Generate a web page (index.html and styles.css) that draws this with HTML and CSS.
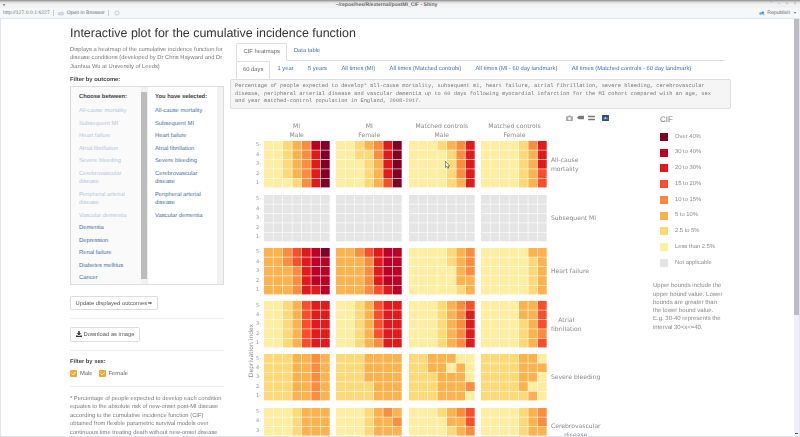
FILE: index.html
```html
<!DOCTYPE html>
<html lang="en">
<head>
  <meta charset="UTF-8" />
  <title>postMI_CIF - Shiny</title>
  <link rel="stylesheet" href="styles.css">
</head>
<body>
  <div class="titlebar">
    <span class="menu-caret">&#9662;</span>
    <span class="window-title">~/repos/hes/R/external/postMI_CIF - Shiny</span>
    <span class="window-buttons"><i>&#8963;</i><i>&#8722;</i><i>+</i><i>&#215;</i></span>
  </div>
  <div class="toolbar">
    <span class="url">http://127.0.0.1:6227</span>
    <span class="sep"></span>
    <svg class="tool-icon" viewBox="0 0 8 6"><path d="M0 2h3l1-1h3v4H1z" fill="#d5dfea" stroke="#9fb0c2" stroke-width=".5"/></svg>
    <span class="open-browser">Open in Browser</span>
    <span class="sep"></span>
    <svg class="refresh-icon" viewBox="0 0 8 8"><circle cx="4" cy="4" r="2.8" fill="none" stroke="#b9c6d8" stroke-width="1.1"/></svg>
    <span class="publish">
      <svg class="publish-icon" viewBox="0 0 8 6"><circle cx="2" cy="3" r="1.7" fill="#5aa7e0"/><circle cx="5" cy="2" r="1.7" fill="#2f85cc"/><circle cx="6" cy="4" r="1.4" fill="#8cc3ea"/></svg>
      Republish <span class="caret">&#9662;</span>
    </span>
  </div>

  <div class="frame">
    <div class="page">
      <h1>Interactive plot for the cumulative incidence function</h1>
      <div class="layout">
        <aside class="sidebar">
          <p class="intro">Displays a heatmap of the cumulative incidence function for disease conditions (developed by Dr Chris Hayward and Dr Jianhua Wu at University of Leeds)</p>
          <div class="filter-label">Filter by outcome:</div>
          <div class="multi">
            <div class="multi-col multi-left">
              <div class="multi-head">Choose between:</div>
              <a class="dim">All-cause mortality</a>
              <a class="dim">Subsequent MI</a>
              <a class="dim">Heart failure</a>
              <a class="dim">Atrial fibrillation</a>
              <a class="dim">Severe bleeding</a>
              <a class="dim">Cerebrovascular disease</a>
              <a class="dim">Peripheral arterial disease</a>
              <a class="dim">Vascular dementia</a>
              <a>Dementia</a>
              <a>Depression</a>
              <a>Renal failure</a>
              <a>Diabetes mellitus</a>
              <a>Cancer</a>
              <span class="scroll scroll-thumb"></span>
            </div>
            <div class="multi-col multi-right">
              <div class="multi-head">You have selected:</div>
              <a>All-cause mortality</a>
              <a>Subsequent MI</a>
              <a>Heart failure</a>
              <a>Atrial fibrillation</a>
              <a>Severe bleeding</a>
              <a>Cerebrovascular disease</a>
              <a>Peripheral arterial disease</a>
              <a>Vascular dementia</a>
              <span class="scroll"></span>
            </div>
          </div>
          <button class="btn btn-update">
            Update displayed outcomes
            <svg class="arrow-icon" viewBox="0 0 4 4"><path d="M0 1.6h2.4V.7L4 2 2.4 3.3v-.9H0z" fill="#444"/></svg>
          </button>
          <hr />
          <button class="btn btn-download">
            <svg class="dl-icon" viewBox="0 0 8 8"><path d="M3 0h2v3h2L4 6 1 3h2zM0 6h2l2 1 2-1h2v2H0z" fill="#333"/></svg>
            Download as image
          </button>
          <hr />
          <div class="filter-label">Filter by sex:</div>
          <div class="checks">
            <label class="check"><span class="box"><svg viewBox="0 0 8 8"><path d="M1.8 4l1.6 1.6 2.9-3" fill="none" stroke="#fff" stroke-width="1.1"/></svg></span>Male</label>
            <label class="check"><span class="box"><svg viewBox="0 0 8 8"><path d="M1.8 4l1.6 1.6 2.9-3" fill="none" stroke="#fff" stroke-width="1.1"/></svg></span>Female</label>
          </div>
          <hr />
          <p class="footnote">* Percentage of people expected to develop each condition equates to the absolute risk of new-onset post-MI disease according to the cumulative incidence function (CIF) obtained from flexible parametric survival models over continuous time treating death without new-onset disease</p>
        </aside>

        <main class="content">
          <div class="tabs">
            <a class="tab active">CIF heatmaps</a>
            <a class="tab">Data table</a>
          </div>
          <div class="tabs subtabs">
            <a class="tab active">60 days</a>
            <a class="tab">1 year</a>
            <a class="tab">5 years</a>
            <a class="tab">All times (MI)</a>
            <a class="tab">All times (Matched controls)</a>
            <a class="tab">All times (MI - 60 day landmark)</a>
            <a class="tab">All times (Matched controls - 60 day landmark)</a>
          </div>
          <pre class="caption">Percentage of people expected to develop* all-cause mortality, subsequent mi, heart failure, atrial fibrillation, severe bleeding, cerebrovascular
disease, peripheral arterial disease and vascular dementia up to 60 days following myocardial infarction for the MI cohort compared with an age, sex
and year matched-control population in England, 2008-2017.</pre>

          <div class="figure">
            <div class="plot">
              <div class="modebar">
                <svg viewBox="0 0 8 7"><path d="M0 1.5h2L3 .5h2l1 1h2V7H0zM4 2.4a1.8 1.8 0 1 0 .01 0z" fill="#a9a9a9" fill-rule="evenodd"/></svg>
                <svg viewBox="0 0 8 7"><path d="M0 3l2-2h6v4H2z" fill="#777"/></svg>
                <svg viewBox="0 0 8 7"><path d="M0 1h8v1.6H0zM0 4.4h8V6H0z" fill="#777"/></svg>
                <svg class="plotly-logo" viewBox="0 0 8 7"><rect width="8" height="7" fill="#2a4d7c"/><path d="M2 3h1v2H2zM3.6 2h1v3h-1zM5.2 3h1v2h-1z" fill="#c9d6e6"/></svg>
              </div>
              <div class="col-heads">
                <div>MI<br />Male</div>
                <div>MI<br />Female</div>
                <div>Matched controls<br />Male</div>
                <div>Matched controls<br />Female</div>
              </div>
              <div id="rows" class="rows"></div>
              <div class="y-title">Deprivation index</div>
              <svg class="cursor" viewBox="0 0 5 8"><path d="M.4.3v6.4l1.4-1.3 1 2.1 1-.5-1-2h1.9z" fill="#fff" stroke="#222" stroke-width=".5"/></svg>
            </div>
            <div class="legend">
              <div class="legend-title">CIF</div>
              <div class="legend-item"><span class="swatch c8"></span>Over 40%</div>
              <div class="legend-item"><span class="swatch c7"></span>30 to 40%</div>
              <div class="legend-item"><span class="swatch c6"></span>20 to 30%</div>
              <div class="legend-item"><span class="swatch c5"></span>15 to 20%</div>
              <div class="legend-item"><span class="swatch c4"></span>10 to 15%</div>
              <div class="legend-item"><span class="swatch c3"></span>5 to 10%</div>
              <div class="legend-item"><span class="swatch c2"></span>2.5 to 5%</div>
              <div class="legend-item"><span class="swatch c1"></span>Less than 2.5%</div>
              <div class="legend-item"><span class="swatch c0"></span>Not applicable</div>
              <p class="legend-note">Upper bounds include the upper bound value. Lower bounds are greater than the lower bound value. E.g. 30-40 represents the interval 30&lt;x&lt;=40.</p>
            </div>
          </div>
        </main>
      </div>
    </div>
    <div class="page-scroll"><span class="page-thumb"></span><span class="page-arrow"></span></div>
  </div>
  <script src="script.js"></script>
</body>
</html>
```

FILE: styles.css
```css
* { margin: 0; padding: 0; box-sizing: border-box; }
html, body { height: 100%; overflow: hidden; }
body {
  display: flex; flex-direction: column;
  font-family: 'Liberation Sans', Arial, sans-serif;
  font-size: 5.8px; line-height: 8.4px; color: #555; background: #fff;
  text-rendering: geometricPrecision;
}

/* window chrome */
.titlebar {
  height: 8px; flex: none; display: flex; justify-content: center;
  position: relative; font-size: 5.1px; line-height: 6px; font-weight: bold; color: #666;
  background: linear-gradient(#8a8a8a 0, #d8d8d8 2px, #f2f2f2 4px);
}
.menu-caret { position: absolute; left: 3px; top: 2px; font-size: 4px; color: #777; }
.window-title { margin: 2px 27px 0 0; }
.window-buttons { position: absolute; right: 3px; top: 1px; display: flex; gap: 4px; font-weight: normal; color: #999; font-size: 5px; }
.window-buttons i { font-style: normal; width: 4px; text-align: center; }
.toolbar {
  height: 10px; flex: none; display: flex; align-items: center; gap: 3px;
  padding: 0 3px; font-size: 5.1px; color: #666; background: #f6f7f8;
}
.url { color: #777; }
.sep { width: 1px; height: 6px; background: #ccc; }
.tool-icon { width: 6px; height: 5px; margin-left: 1px; }
.refresh-icon { width: 6px; height: 6px; margin-left: 2px; }
.publish { margin-left: auto; display: flex; align-items: center; gap: 2px; margin-right: 1px; }
.publish-icon { width: 6px; height: 5px; }
.caret { font-size: 4px; margin-left: 2px; }

.frame {
  flex: 1; min-height: 0; display: flex;
  border: 1px solid #dfe5f4; border-width: 1px 1px 1.5px 1px;
  filter: blur(0.3px);
}
.page { flex: 1; min-width: 0; overflow: hidden; padding-left: 69px; }
.page-scroll { width: 5px; flex: none; background: #f1f1f1; position: relative; }
.page-thumb { display: block; height: 296px; background: #bcbcbc; }
.page-arrow { position: absolute; bottom: 2px; left: 1px; width: 3px; height: 1.5px; background: #555; }

h1 { font-size: 12.46px; line-height: 16px; font-weight: normal; color: #333; padding-top: 6px; height: 24px; }

.layout { display: flex; gap: 6px; }

/* sidebar */
.sidebar { width: 154px; flex: none; padding-top: 3px; color: #777; }
.intro { margin-bottom: 4.5px; }
.filter-label { font-weight: bold; color: #444; }
.multi {
  display: flex; height: 199px; margin-top: 2px; margin-bottom: 10.5px;
  border: 1px solid #ddd; overflow: hidden;
}
.multi-col { position: relative; padding: 6px 12px 0 8px; }
.multi-left { width: 76px; flex: none; background: #fafafa; }
.multi-right { flex: 1; background: #fff; border-left: 1px solid #eee; padding-left: 7px; }
.multi-head { font-weight: bold; color: #444; margin-bottom: 3.8px; white-space: nowrap; }
.multi-col a { display: block; color: #3f6ea5; padding: 2.05px 0; }
.multi-col a.dim { opacity: 0.4; }
.scroll { position: absolute; right: 0; top: 0; bottom: 0; width: 6px; background: #f2f2f2; }
.scroll-thumb::before { content: ""; position: absolute; left: 0; right: 0; top: 5px; bottom: 5px; background: #bcbcbc; }

.btn {
  display: flex; align-items: center; gap: 2px; height: 14.5px; padding: 0 4.5px;
  font: inherit; color: #555; background: #fff; border: 1px solid #ddd; border-radius: 1.5px;
}
.dl-icon { width: 6px; height: 6px; }
.arrow-icon { width: 4px; height: 4px; margin-left: -1px; }
.sidebar hr { border: 0; border-top: 1px solid #eee; margin: 8px 0; }
.sidebar hr + .filter-label { margin-top: -1px; }
.checks { display: flex; gap: 6px; margin-top: 3.5px; }
.check { display: flex; align-items: center; gap: 3px; color: #666; }
.box { width: 7px; height: 7px; border-radius: 1px; background: #f0a93c; display: block; }
.box svg { display: block; width: 7px; height: 7px; }

/* tabs */
.content { width: 501px; flex: none; }
.tabs { display: flex; margin-left: 6px; border-bottom: 1px solid #ddd; height: 18px; margin-right: 6px; }
.subtabs { border-bottom: 0; height: 17.5px; margin-right: 0; }
.tab { display: block; padding: 0 6.5px; line-height: 17px; color: #3a72b0; white-space: nowrap; }
.tab.active { color: #666; background: #fff; border: 1px solid #ddd; border-bottom-color: #fff; border-radius: 2px 2px 0 0; height: 18px; }
.subtabs .tab { padding: 0 6px; }
.subtabs .tab + .tab { padding: 0 7.2px; }
.caption {
  font-family: 'Liberation Mono', monospace; font-size: 5.37px; line-height: 7.6px;
  color: #777; background: #f5f5f5; border: 1px solid #ddd; border-radius: 2px;
  padding: 3.5px 4px 3.5px 4px; height: 30.5px; white-space: pre; overflow: hidden;
}

/* plot */
.figure { display: flex; }
.plot { width: 423px; flex: none; position: relative; padding-top: 5px; }
.modebar { display: flex; justify-content: flex-end; align-items: center; gap: 4px; height: 7px; width: 379px; }
.modebar svg { width: 7px; height: 6px; display: block; }
.modebar .plotly-logo { margin-left: 3px; }
.col-heads, .plot-row { display: grid; grid-template-columns: repeat(4, 66.3px); column-gap: 6.3px; padding-left: 33.5px; }
.col-heads { text-align: center; font-family: 'DejaVu Sans', sans-serif; font-size: 6.1px; line-height: 9px; color: #888; margin-top: 0.5px; height: 19.7px; }
.col-heads div { white-space: nowrap; }
.plot-row { height: 47px; margin-bottom: 6.1px; grid-template-columns: repeat(4, 66.3px) 52px; position: relative; }
.plot-row:first-child { margin-bottom: 7px; }
.panel { display: block; width: 66.3px; height: 47px; }
.ticks {
  position: absolute; left: 26px; top: 0; bottom: 0; width: 8px; display: flex; flex-direction: column; justify-content: space-around;
  font-family: 'DejaVu Sans', sans-serif; font-size: 5px; line-height: 5px; color: #999;
}
.row-label {
  align-self: center; text-align: center; font-family: 'DejaVu Sans', sans-serif;
  font-size: 6.1px; line-height: 9px; color: #888; white-space: nowrap; justify-self: start; margin-left: -3px;
}
.y-title {
  position: absolute; left: 21px; top: 238px; white-space: nowrap;
  font-family: 'DejaVu Sans', sans-serif; font-size: 6px; line-height: 7px; color: #888;
  transform: translate(-50%, 0) rotate(-90deg);
}
.cursor { position: absolute; left: 215px; top: 52px; width: 5px; height: 8px; }

.c0 { background: #e5e5e5; fill: #e5e5e5; }
.c1 { background: #ffeda0; fill: #ffeda0; }
.c2 { background: #fed976; fill: #fed976; }
.c3 { background: #feb24c; fill: #feb24c; }
.c4 { background: #fd8d3c; fill: #fd8d3c; }
.c5 { background: #fc4e2a; fill: #fc4e2a; }
.c6 { background: #e31a1c; fill: #e31a1c; }
.c7 { background: #bd0026; fill: #bd0026; }
.c8 { background: #800026; fill: #800026; }

/* legend */
.legend { width: 78px; flex: none; padding-top: 5px; color: #888; }
.legend-title { font-size: 8px; line-height: 11px; color: #777; margin-left: 7px; margin-bottom: 4px; }
.legend-item { display: flex; align-items: center; gap: 7px; height: 15.75px; margin-left: 7px; white-space: nowrap; font-size: 5.8px; }
.swatch { width: 8px; height: 8px; flex: none; }
.legend-note { margin-top: 11.5px; width: 72px; line-height: 8.3px; font-size: 6px; }
```

FILE: script.js
```js
// heatmap values per outcome: one string for each panel, rows 5 to 1, digit = colour class
const outcomes = [
  { label: 'All-cause<br>mortality', panels: [
    ['1123478', '1123468', '1123468', '1123468', '1112468'],
    ['1123468', '1122468', '1112368', '1112368', '1112358'],
    ['1112346', '1111246', '1111246', '1111246', '1111236'],
    ['1111246', '1111236', '1111236', '1111235', '1111235']
  ]},
  { label: 'Subsequent MI', panels: [
    ['0000000', '0000000', '0000000', '0000000', '0000000'],
    ['0000000', '0000000', '0000000', '0000000', '0000000'],
    ['0000000', '0000000', '0000000', '0000000', '0000000'],
    ['0000000', '0000000', '0000000', '0000000', '0000000']
  ]},
  { label: 'Heart failure', panels: [
    ['3345678', '3345677', '3334677', '3334677', '3334667'],
    ['3345677', '3334677', '3334677', '3334677', '3334567'],
    ['1111234', '1111234', '1111134', '1111133', '1111123'],
    ['1111133', '1111123', '1111123', '1111123', '1111123']
  ]},
  { label: 'Atrial<br>fibrillation', panels: [
    ['1123566', '1123566', '1123566', '1123566', '1123566'],
    ['1123566', '1123566', '1123566', '1123566', '1123466'],
    ['1112345', '1112346', '1112346', '1112346', '1112346'],
    ['1111335', '1111335', '1111235', '1111234', '1111235']
  ]},
  { label: 'Severe bleeding', panels: [
    ['2223343', '2223343', '2223343', '2223343', '2223343'],
    ['2223333', '2223333', '2223333', '2222333', '2222333'],
    ['2233311', '2233131', '2223331', '2223334', '2223331'],
    ['2222331', '2222333', '2222331', '2222311', '2222231']
  ]},
  { label: 'Cerebrovascular<br>disease', panels: [
    ['1112333', '1112333', '1112333', '1112333', '1112333'],
    ['1112343', '1112334', '1112333', '1112333', '1112333'],
    ['1112345', '1111335', '1111234', '1111234', '1111234'],
    ['1111234', '1111234', '1111233', '1111233', '1111233']
  ]}
];

const SVG_NS = 'http://www.w3.org/2000/svg';
const STEP_X = 66.3 / 7;
const STEP_Y = 47 / 5;
const GAP = 0.6;

function drawPanel(panel) {
  const svg = document.createElementNS(SVG_NS, 'svg');
  svg.setAttribute('class', 'panel');
  svg.setAttribute('viewBox', '0 0 66.3 47');
  panel.forEach(function(line, y) {
    line.split('').forEach(function(v, x) {
      const rect = document.createElementNS(SVG_NS, 'rect');
      rect.setAttribute('class', 'c' + v);
      rect.setAttribute('x', x * STEP_X);
      rect.setAttribute('y', y * STEP_Y);
      rect.setAttribute('width', STEP_X - GAP);
      rect.setAttribute('height', STEP_Y - GAP);
      svg.appendChild(rect);
    });
  });
  return svg;
}

const rows = document.getElementById('rows');
outcomes.forEach(function(outcome) {
  const row = document.createElement('div');
  row.className = 'plot-row';
  const ticks = document.createElement('div');
  ticks.className = 'ticks';
  ticks.innerHTML = '<span>5-</span><span>4-</span><span>3-</span><span>2-</span><span>1-</span>';
  row.appendChild(ticks);
  outcome.panels.forEach(function(panel) {
    row.appendChild(drawPanel(panel));
  });
  const label = document.createElement('div');
  label.className = 'row-label';
  label.innerHTML = outcome.label;
  row.appendChild(label);
  rows.appendChild(row);
});
```
